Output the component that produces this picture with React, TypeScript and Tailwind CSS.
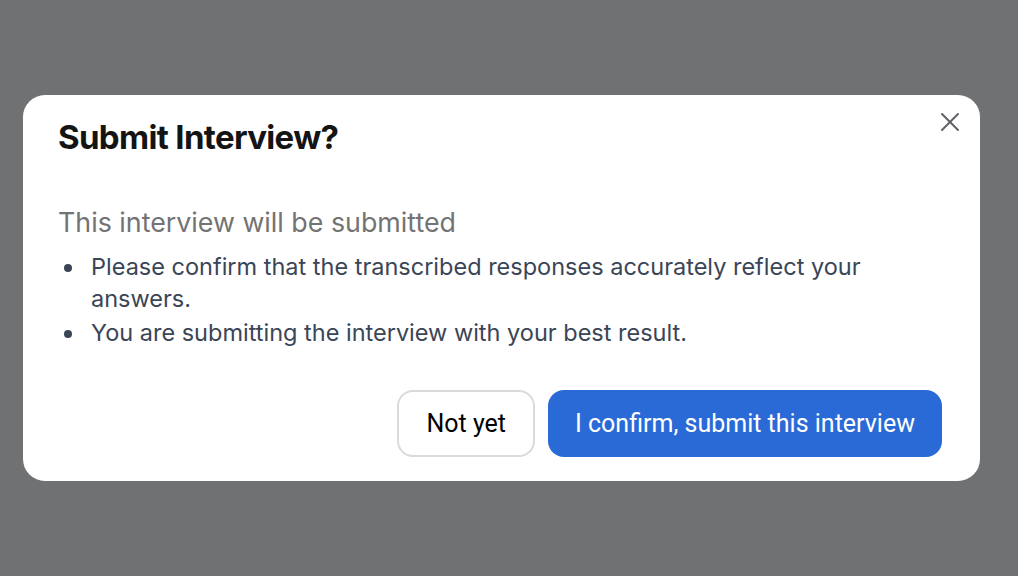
import { X } from "lucide-react";

const points = [
  "Please confirm that the transcribed responses accurately reflect your answers.",
  "You are submitting the interview with your best result.",
];

export default function App() {
  return (
    <div className="flex h-[576px] w-[1018px] items-center bg-[#707173] pl-[23px] font-['Inter',sans-serif]">
      <div className="relative w-[957px] rounded-[22px] bg-white pb-6 pl-[35px] pr-[38px] pt-[20px]">
        <button className="absolute right-[14px] top-[11px] text-[#5f6166]">
          <X className="h-[32px] w-[32px]" strokeWidth={1.5} />
        </button>
        <h2 className="text-[33px] font-bold leading-[44px] tracking-[-0.02em] text-[#141414]">
          Submit Interview?
        </h2>
        <p className="mt-[45px] text-[26.8px] leading-[36px] text-[#737373]">
          This interview will be submitted
        </p>
        <ul className="mt-[11px] flex flex-col gap-[2px] text-[23.5px] leading-[32px] text-[#3a4556]">
          {points.map((p) => (
            <li key={p} className="flex pr-[40px]">
              <span className="ml-[6px] mr-[19px] mt-[13px] h-[8px] w-[8px] shrink-0 rounded-full bg-[#3a4556]" />
              <span>{p}</span>
            </li>
          ))}
        </ul>
        <div className="mt-[41px] flex justify-end gap-[13px]">
          <button className="h-[67px] rounded-[16px] border-2 border-[#dadada] px-[27px] font-['Roboto',sans-serif] text-[25px] text-black">
            Not yet
          </button>
          <button className="h-[67px] rounded-[16px] bg-[#2a6ad6] px-[27px] font-['Roboto',sans-serif] text-[25px] text-white">
            I confirm, submit this interview
          </button>
        </div>
      </div>
    </div>
  );
}
